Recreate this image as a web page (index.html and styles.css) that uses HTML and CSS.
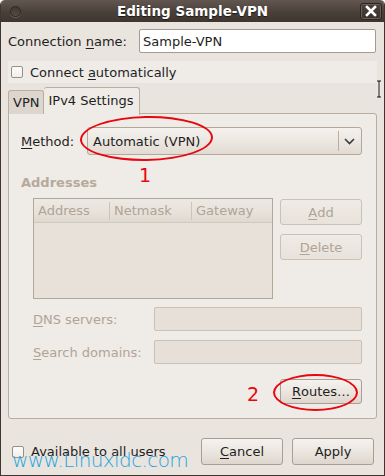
FILE: index.html
```html
<!DOCTYPE html>
<html lang="en">
<head>
    <meta charset="UTF-8">
    <title>Editing Sample-VPN</title>
    <link rel="stylesheet" href="styles.css">
</head>
<body>
    <div class="window">
        <div class="titlebar">
            <span class="menu-dot"></span>
            <span class="title">Editing Sample-VPN</span>
            <span class="close-btn">
                <svg width="12" height="12" viewBox="0 0 12 12">
                    <path d="M2 2 L10 10 M10 2 L2 10" stroke="#fff" stroke-width="2.6" stroke-linecap="square"/>
                </svg>
            </span>
        </div>

        <div class="content">
            <div class="name-row">
                <label class="name-label">Connection <u>n</u>ame:</label>
                <div class="entry">Sample-VPN</div>
            </div>

            <div class="auto-row">
                <span class="check"></span>
                <span>Connect <u>a</u>utomatically</span>
            </div>

            <div class="notebook">
                <div class="tabs">
                    <div class="tab">VPN</div>
                    <div class="tab active">IPv4 Settings</div>
                </div>
                <div class="page">
                    <div class="method-row">
                        <span class="method-label"><u>M</u>ethod:</span>
                        <div class="combo">
                            <span class="combo-text">Automatic (VPN)</span>
                            <span class="combo-sep"></span>
                            <svg class="combo-arrow" width="11" height="7" viewBox="0 0 11 7">
                                <path d="M1 1 L5.5 5.5 L10 1" fill="none" stroke="#3a3a3a" stroke-width="1.6"/>
                            </svg>
                        </div>
                    </div>

                    <div class="section-title">Addresses</div>
                    <div class="addresses">
                        <div class="table">
                            <div class="table-head">
                                <span class="col col-addr">Address</span>
                                <span class="col col-mask">Netmask</span>
                                <span class="col col-gw">Gateway</span>
                            </div>
                        </div>
                        <div class="side-buttons">
                            <div class="btn disabled"><u>A</u>dd</div>
                            <div class="btn disabled"><u>D</u>elete</div>
                        </div>
                    </div>

                    <div class="field-row">
                        <span class="field-label"><u>D</u>NS servers:</span>
                        <div class="entry disabled"></div>
                    </div>
                    <div class="field-row">
                        <span class="field-label"><u>S</u>earch domains:</span>
                        <div class="entry disabled"></div>
                    </div>

                    <div class="routes-row">
                        <div class="btn"><u>R</u>outes…</div>
                    </div>
                </div>
            </div>

            <div class="footer">
                <div class="footer-check">
                    <span class="check"></span>
                    <span>Available to all users</span>
                </div>
                <div class="footer-buttons">
                    <div class="btn big"><u>C</u>ancel</div>
                    <div class="btn big">Apply</div>
                </div>
            </div>
        </div>

        <!-- annotations drawn over the screenshot -->
        <div class="ring ring-1"></div>
        <div class="mark mark-1">1</div>
        <div class="ring ring-2"></div>
        <div class="mark mark-2">2</div>
        <div class="watermark">www.Linuxidc.com</div>
        <svg class="ibeam" width="6" height="18" viewBox="0 0 6 18">
            <path d="M1 1 H3 V17 H1 M3 1 H5 M3 17 H5" fill="none" stroke="#fff" stroke-width="2.4"/>
            <path d="M1 1 H3 V17 H1 M3 1 H5 M3 17 H5" fill="none" stroke="#000" stroke-width="1"/>
        </svg>
    </div>
</body>
</html>
```

FILE: styles.css
```css
:root {
    --bg: #e9e4de;
    --page-bg: #efebe6;
    --text: #1e1e1e;
    --muted: #b0a496;
    --border: #b3a797;
    --soft-border: #cbc1b5;
    --red: #e8070f;
}

* {
    margin: 0;
    padding: 0;
    box-sizing: border-box;
}

body {
    font-family: "DejaVu Sans", sans-serif;
    font-size: 13px;
    color: var(--text);
    background: #fff;
}

u {
    text-decoration: underline;
    text-underline-offset: 2px;
}

.window {
    position: relative;
    width: 385px;
    height: 476px;
    background: var(--bg);
    border: 1px solid #3f3631;
    border-top: none;
    border-radius: 5px 5px 0 0;
    display: flex;
    flex-direction: column;
    overflow: hidden;
}

.titlebar {
    height: 22px;
    margin: 0 -1px;
    background: linear-gradient(#625650, #4a403a 55%, #3e3530);
    border-radius: 5px 5px 0 0;
    display: grid;
    grid-template-columns: 1fr auto 1fr;
    align-items: center;
    padding: 0 3px;
}

.menu-dot {
    width: 11px;
    height: 11px;
    margin-left: 7px;
    border-radius: 50%;
    border: 1px solid #2e2723;
    background: linear-gradient(#40372f, #574c45);
    box-shadow: 0 1px 0 rgba(255, 255, 255, 0.18);
}

.title {
    font-weight: bold;
    font-size: 13.5px;
    color: #fff;
    text-shadow: 0 1px 1px #1c1714;
}

.close-btn {
    justify-self: end;
    width: 22px;
    height: 17px;
    border: 1px solid #2b2420;
    border-radius: 3px;
    background: linear-gradient(#4b413b, #3a322d);
    box-shadow: inset 0 0 0 1px #6a5e56;
    display: flex;
    align-items: center;
    justify-content: center;
}

.content {
    flex: 1;
    padding: 7px 7px 0 7px;
    display: flex;
    flex-direction: column;
}

.name-row {
    display: flex;
    align-items: center;
    height: 24px;
}

.name-label {
    width: 131px;
}

.entry {
    width: 237px;
    height: 24px;
    background: #fff;
    border: 1px solid #a59a8f;
    border-radius: 2px;
    padding: 0 3px;
    display: flex;
    align-items: center;
}

.entry.disabled {
    width: 208px;
    background: #e6e0d9;
    border-color: var(--soft-border);
}

.auto-row {
    margin-top: 8px;
    height: 22px;
    width: 369px;
    background: #efebe7;
    display: flex;
    align-items: center;
    gap: 7px;
    padding-left: 3px;
}

.check {
    width: 12px;
    height: 12px;
    border: 1px solid #9a8f85;
    border-radius: 2px;
    background: linear-gradient(#fdfcfb, #f1eeea);
}

.notebook {
    margin-top: 5px;
    width: 369px;
}

.tabs {
    display: flex;
    align-items: flex-end;
    height: 26px;
    position: relative;
    z-index: 1;
    margin-bottom: -1px;
}

.tab {
    height: 24px;
    padding: 0 4px;
    border: 1px solid #b9ae9f;
    border-bottom: none;
    border-radius: 3px 3px 0 0;
    background: #ddd6ce;
    display: flex;
    align-items: center;
}

.tab.active {
    height: 28px;
    margin-bottom: -1px;
    padding: 0 5px 2px 4px;
    background: var(--page-bg);
    border-left: none;
}

.page {
    height: 306px;
    border: 1px solid #b8ad9f;
    border-radius: 0 3px 3px 3px;
    background: var(--page-bg);
    padding: 13px 14px 0 12px;
    display: flex;
    flex-direction: column;
}

.method-row {
    display: flex;
    align-items: center;
    justify-content: space-between;
}

.combo {
    width: 275px;
    height: 28px;
    border: 1px solid #b2a799;
    border-radius: 3px;
    background: linear-gradient(#f4f1ee, #ebe6e0 55%, #e2dbd3);
    display: flex;
    align-items: center;
    padding-left: 5px;
}

.combo-text {
    flex: 1;
}

.combo-sep {
    width: 1px;
    height: 20px;
    background: #b9ae9f;
    margin-right: 5px;
}

.combo-arrow {
    margin-right: 6px;
}

.section-title {
    margin-top: 20px;
    height: 15px;
    line-height: 15px;
    font-weight: bold;
    color: #b6aa9b;
}

.addresses {
    margin-top: 8px;
    padding-left: 12px;
    display: flex;
    gap: 7px;
}

.table {
    width: 240px;
    height: 101px;
    border: 1px solid var(--border);
    background: #e7e1da;
}

.table-head {
    height: 24px;
    display: flex;
    align-items: center;
    background: linear-gradient(#ede8e3, #e7e1da 60%, #dfd8d0);
    border-bottom: 1px solid #d2c9be;
    color: var(--muted);
}

.col {
    height: 18px;
    display: flex;
    align-items: center;
    padding-left: 4px;
}

.col-addr { width: 75px; }
.col-mask { width: 82px; border-left: 1px solid #cdc3b7; }
.col-gw { border-left: 1px solid #cdc3b7; }

.side-buttons {
    display: flex;
    flex-direction: column;
    gap: 9px;
    padding-top: 1px;
}

.btn {
    width: 82px;
    height: 26px;
    border: 1px solid #a89e93;
    border-radius: 3px;
    background: linear-gradient(#f5f2ef, #e9e3dc 60%, #ded6cd);
    display: flex;
    align-items: center;
    justify-content: center;
}

.btn.disabled {
    color: var(--muted);
    border-color: var(--soft-border);
    background: linear-gradient(#efebe6, #e8e2db);
}

.btn.big {
    height: 27px;
}

.field-row {
    margin-top: 8px;
    padding-left: 12px;
    display: flex;
    align-items: center;
    justify-content: space-between;
    color: var(--muted);
}

.field-row + .field-row {
    margin-top: 9px;
}

.routes-row {
    margin-top: 15px;
    display: flex;
    justify-content: flex-end;
}

.routes-row .btn {
    height: 25px;
}

.footer {
    margin-top: 19px;
    display: flex;
    align-items: center;
    justify-content: space-between;
    padding-right: 3px;
}

.footer-check {
    display: flex;
    align-items: center;
    gap: 7px;
    padding-left: 4px;
}

.footer-buttons {
    display: flex;
    gap: 9px;
}

.ring {
    position: absolute;
    border: 2px solid var(--red);
    border-radius: 50%;
}

.ring-1 {
    left: 79px;
    top: 116px;
    width: 133px;
    height: 45px;
    transform: rotate(-1deg);
}

.ring-2 {
    left: 272px;
    top: 374px;
    width: 85px;
    height: 37px;
}

.mark {
    position: absolute;
    font-size: 19px;
    line-height: 19px;
    color: var(--red);
}

.mark-1 { left: 138px; top: 166px; }
.mark-2 { left: 246px; top: 385px; }

.watermark {
    position: absolute;
    left: 11px;
    top: 450px;
    font-size: 20px;
    line-height: 20px;
    font-weight: 200;
    color: #1ea5df;
    letter-spacing: -0.6px;
}

.ibeam {
    position: absolute;
    left: 375px;
    top: 80px;
}
```
